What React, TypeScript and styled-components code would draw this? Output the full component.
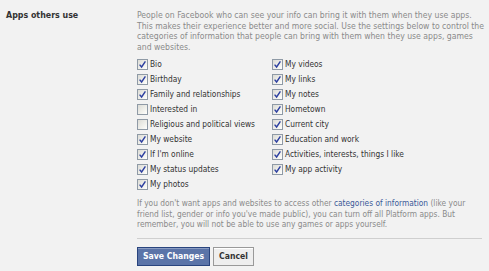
import React from 'react'
import styled, { createGlobalStyle } from 'styled-components'

const GlobalStyle = createGlobalStyle`
  html, body { margin: 0; padding: 0; background: #f2f2f2; }
  body {
    font-family: "DejaVu Sans Condensed", "DejaVu Sans", Verdana, sans-serif;
    font-size: 8.3px;
    color: #333;
  }
`

const Section = styled.div`
  display: grid;
  grid-template-columns: 137px 345px;
  padding-top: 10px;
`

const Heading = styled.div`
  padding-left: 6px;
  font-weight: bold;
  font-size: 8.8px;
  line-height: 11px;
  color: #333;
`

const Content = styled.div`
  display: flex;
  flex-direction: column;
`

const Note = styled.p<{ $top?: number }>`
  margin: ${p => p.$top ?? 0}px 0 0;
  color: #8a8a8a;
  line-height: 10.7px;
`

const Intro = styled(Note)`
  font-size: 8.6px;
  white-space: nowrap;
`

const Link = styled.a`
  color: #3b5998;
  text-decoration: none;
`

const Columns = styled.div`
  display: grid;
  grid-template-columns: 135px 1fr;
  margin-top: 4px;
`

const Column = styled.div`
  display: flex;
  flex-direction: column;
`

const Option = styled.label`
  display: flex;
  align-items: center;
  gap: 2px;
  height: 15px;
  color: #333;
  white-space: nowrap;
`

const Box = styled.span<{ $checked: boolean }>`
  box-sizing: border-box;
  width: 11px;
  height: 11px;
  border: 1px solid #8f9aa6;
  background: linear-gradient(135deg, #dcdcd6 0%, #f4f4f0 70%, #ffffff 100%);
  display: inline-flex;
  align-items: center;
  justify-content: center;
  flex: none;
`

const Rule = styled.hr`
  margin: 8px 0 0;
  border: 0;
  border-top: 1px solid #cfcfcf;
  height: 0;
`

const Actions = styled.div`
  display: flex;
  gap: 3px;
  margin-top: 8px;
`

const Button = styled.button<{ $primary?: boolean }>`
  box-sizing: border-box;
  height: 19px;
  padding: 0 5px;
  font-family: inherit;
  font-size: 8.6px;
  font-weight: bold;
  border: 1px solid ${p => (p.$primary ? '#29447e' : '#999')};
  background: ${p => (p.$primary ? '#5b74a8' : '#eeeeee')};
  color: ${p => (p.$primary ? '#fff' : '#333')};
  box-shadow: inset 0 1px 0 ${p => (p.$primary ? '#8a9cc2' : '#fff')};
  cursor: pointer;
`

const Check = () => (
  <svg width="9" height="9" viewBox="0 0 9 9">
    <path d="M1.6 4.6 L3.6 7 L7.4 1.4" fill="none" stroke="#2c3fa0" strokeWidth="1.4" />
  </svg>
)

type Item = { label: string; on: boolean }

const left: Item[] = [
  { label: 'Bio', on: true },
  { label: 'Birthday', on: true },
  { label: 'Family and relationships', on: true },
  { label: 'Interested in', on: false },
  { label: 'Religious and political views', on: false },
  { label: 'My website', on: true },
  { label: "If I'm online", on: true },
  { label: 'My status updates', on: true },
  { label: 'My photos', on: true },
]

const right: Item[] = [
  { label: 'My videos', on: true },
  { label: 'My links', on: true },
  { label: 'My notes', on: true },
  { label: 'Hometown', on: true },
  { label: 'Current city', on: true },
  { label: 'Education and work', on: true },
  { label: 'Activities, interests, things I like', on: true },
  { label: 'My app activity', on: true },
]

const renderItems = (items: Item[]) =>
  items.map(it => (
    <Option key={it.label}>
      <Box $checked={it.on}>{it.on && <Check />}</Box>
      {it.label}
    </Option>
  ))

export default function App() {
  return (
    <>
      <GlobalStyle />
      <Section>
        <Heading>Apps others use</Heading>
        <Content>
          <Intro>
            People on Facebook who can see your info can bring it with them when they use apps.<br />
            This makes their experience better and more social. Use the settings below to control the<br />
            categories of information that people can bring with them when they use apps, games<br />
            and websites.
          </Intro>
          <Columns>
            <Column>{renderItems(left)}</Column>
            <Column>{renderItems(right)}</Column>
          </Columns>
          <Note $top={6}>
            If you don't want apps and websites to access other <Link href="#">categories of information</Link> (like your
            friend list, gender or info you've made public), you can turn off all Platform apps. But
            remember, you will not be able to use any games or apps yourself.
          </Note>
          <Rule />
          <Actions>
            <Button $primary>Save Changes</Button>
            <Button>Cancel</Button>
          </Actions>
        </Content>
      </Section>
    </>
  )
}
